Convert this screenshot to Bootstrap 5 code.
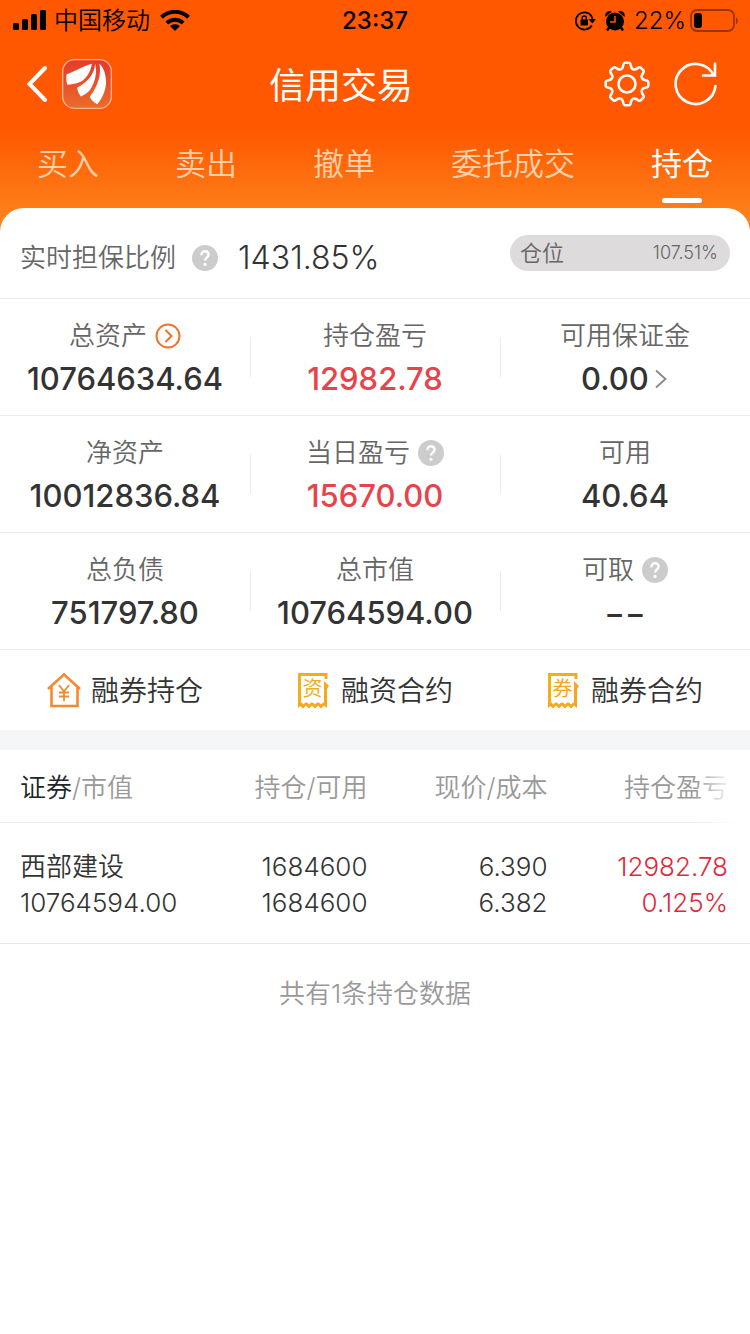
<!DOCTYPE html>
<html lang="zh-CN">
<head>
<meta charset="utf-8">
<meta name="viewport" content="width=device-width, initial-scale=1">
<title>信用交易</title>
<link href="https://cdn.jsdelivr.net/npm/bootstrap@5.3.0/dist/css/bootstrap.min.css" rel="stylesheet">
<style>
  body { font-family: Inter, "Noto Sans CJK SC", sans-serif; font-size: 26px; line-height: 36px; font-weight: 350; color: #333; background: #fff; }
  svg { display: block; flex: none; }
  .hero { background: linear-gradient(#ff5800 0, #ff5800 130px, #fd7d18 208px, #fd8a20 240px); padding-bottom: 32px; }
  .status { height: 40px; padding: 2px 12px 0 12px; font-size: 24px; color: #000; }
  .clock { font-weight: 500; }
  .side { flex: 1 1 0; }
  .topbar { height: 88px; padding: 0 32px 0 24px; }
  .topbar h1 { font-size: 36px; line-height: 48px; font-weight: 400; margin: 4px 60px 0 0; }
  .tabs { padding: 0 37px; height: 80px; }
  .tabs a { font-size: 31px; line-height: 48px; padding: 12px 0 20px; color: #ffd0ac; text-decoration: none; position: relative; }
  .tabs a.active { color: #fff; font-weight: 400; }
  .tabs a.active::after { content: ""; position: absolute; bottom: 5px; left: 50%; margin-left: -20px; width: 40px; height: 5px; border-radius: 3px; background: #fff; }
  .sheet { margin-top: -32px; border-radius: 24px 24px 0 0; background: #fff; }
  .line { border-bottom: 1px solid #ececec; }
  .guarantee { height: 91px; padding: 10px 20px 0; }
  .guarantee .figure-value { font-size: 32px; }
  .soft { color: #666; }
  .pill { width: 220px; height: 36px; margin-top: -10px; padding: 0 12px 0 10px; border-radius: 18px; background: #dddbdc; font-size: 22px; color: #666; }
  .pill .pct { font-size: 18px; }
  .cell { padding: 19px 0 11px; }
  .cell + .cell { background: linear-gradient(#ececec, #ececec) left center / 1px 40px no-repeat; }
  .value { font-size: 31px; line-height: 50px; font-weight: 500; }
  .rise { color: #e8434b; }
  .bare { border: 0; padding: 0; background: none; color: inherit; }
  .quick a { height: 80px; padding-top: 2px; font-size: 28px; color: #333; text-decoration: none; gap: 10px; }
  .band { height: 20px; background: #f5f6f8; }
  .hold { border-collapse: separate; border-spacing: 0; table-layout: fixed; }
  .hold th { height: 73px; padding: 4px 0 0; font-weight: 350; color: #999; white-space: nowrap; border-bottom: 1px solid #ececec; }
  .hold td { padding: 26px 0 22px; border-bottom: 1px solid #e6e6e6; }
  .hold th:first-child, .hold td:first-child { padding-left: 20px; }
  .hold th:last-child, .hold td:last-child { padding-right: 22px; }
  .hold .loss-gain { position: relative; }
  .loss-gain::after { content: ""; position: absolute; right: 0; top: 0; bottom: -1px; width: 56px; background: linear-gradient(to right, rgba(255,255,255,0), rgba(255,255,255,.85) 60%, #fff); }
  .hold .up { color: #dd2b3d; }
  .total { padding: 32px 0; color: #999; }
</style>
</head>
<body>
<svg width="0" height="0" class="position-absolute" aria-hidden="true">
  <defs>
    <linearGradient id="app" x1="0" y1="0" x2="0" y2="1"><stop offset="0" stop-color="#e63a2b"/><stop offset=".6" stop-color="#e8572a"/><stop offset="1" stop-color="#ea6d2b"/></linearGradient>
    <linearGradient id="gold" x1="0" y1="0" x2="1" y2="1"><stop offset="0" stop-color="#eeb414"/><stop offset="1" stop-color="#fba31b"/></linearGradient>
    <symbol id="help" viewBox="0 0 26 26"><circle cx="13" cy="13" r="13" fill="#ccc"/><path d="M9.4 10.2C9.4 4.8 16.8 5.2 16.6 9.8C16.5 12.6 13 12.4 13 15.6" fill="none" stroke="#fff" stroke-width="2.4"/><circle cx="13" cy="19.4" r="1.6" fill="#fff"/></symbol>
    <path id="tooth" d="M-6.1-14.8C-4.3-15.6-4.1-16.8-3.8-18.4C-3.4-20.8-3-21.3-1.6-21.3H1.6C3-21.3 3.4-20.8 3.8-18.4C4.1-16.8 4.3-15.6 6.1-14.8"/>
    <symbol id="bill" viewBox="0 0 32 36"><path d="M29 6V1.500H2.500V32M28.500 12V32" fill="none" stroke="url(#gold)" stroke-width="3"/><path d="M27 8L32 13L30 16H27Z" fill="#f8a91a"/><path d="M1 29.500H30V35L27 32.500L24 35.500L21 32.500L18 35.500L15 32.500L12 35.500L9 32.500L6 35.500L3.500 33L1 35Z" fill="#f7a81a"/><path d="M4 28.500L6.500 31.500L9 28.500L12 31.500L15 28.500L18 31.500L21 28.500L24 31.500L27 28.500Z" fill="#fff"/></symbol>
  </defs>
</svg>

<header class="hero">
  <div class="status d-flex align-items-center">
    <div class="side d-flex align-items-center">
      <svg width="34" height="22" viewBox="0 0 34 22"><rect x="1" y="13" width="6" height="7" rx="1.500"/><rect x="10" y="9" width="6" height="11" rx="1.500"/><rect x="19" y="4" width="6" height="16" rx="1.500"/><rect x="28" y="0" width="6" height="20" rx="1.500"/></svg>
      <span class="ms-2">中国移动</span>
      <svg class="ms-2" width="34" height="22" viewBox="0 0 34 22"><g fill="none" stroke="#000" stroke-width="4"><path d="M3.500 7.300C11 0 23 0 30.500 7.300"/><path d="M8.800 13C13.500 8.600 20.500 8.600 25.200 13"/></g><path d="M17 21L12 16C15 13.600 19 13.600 22 16Z"/></svg>
    </div>
    <span class="clock">23:37</span>
    <div class="side d-flex align-items-center justify-content-end">
      <svg width="22" height="22" viewBox="0 0 22 22"><path d="M17.500 6A8.600 8.600 0 1 0 17.800 15.500M17 5.500Q18.500 7.500 18.600 10" fill="none" stroke="#000" stroke-width="1.800"/><path d="M14.500 9H22L18.300 13.500Z"/><rect x="6.500" y="9.500" width="7.500" height="6" rx="1"/><path d="M8.200 10V8A2 2 0 0 1 12.300 8V10" fill="none" stroke="#000" stroke-width="1.400"/></svg>
      <svg class="ms-2" width="22" height="22" viewBox="0 0 22 22"><circle cx="11" cy="11.500" r="9"/><path d="M1.500 7A4.600 4.600 0 0 1 8 1.500ZM20.500 7A4.600 4.600 0 0 0 14 1.500Z"/><path d="M5.500 17L3 20.500M16.500 17L19 20.500" stroke="#000" stroke-width="2.400"/><path d="M11 6V12H6" fill="none" stroke="#ff5800" stroke-width="1.500"/></svg>
      <span class="ms-2">22%</span>
      <svg class="ms-1" width="48" height="24" viewBox="0 0 48 24"><rect x="1" y="1" width="43" height="21" rx="6" fill="none" stroke="#000" stroke-opacity=".4" stroke-width="1.800"/><rect x="4" y="4" width="8" height="15" rx="3"/><path d="M46 8.500V15C48.500 14 48.500 9.500 46 8.500Z" fill-opacity=".4"/></svg>
    </div>
  </div>

  <nav class="topbar d-flex align-items-center" aria-label="标题">
    <div class="side d-flex align-items-center">
      <button class="bare" type="button" aria-label="返回"><svg width="26" height="40" viewBox="0 0 26 40"><path d="M21 4L5.500 20L21 36" fill="none" stroke="#fff" stroke-width="4" stroke-linecap="round"/></svg></button>
      <a href="#" class="ms-2 ps-1" aria-label="首页"><svg width="50" height="50" viewBox="-2 -2 151 151"><rect x="0" y="0" width="147" height="147" rx="36" fill="url(#app)" stroke="#ffb490" stroke-width="4"/><g fill="#fff"><path d="M88 12C70 16 38 34 12 44C10 54 11 66 14 76C32 74 54 70 64 60C77 48 86 30 88 12Z"/><path d="M98 12C96 42 78 66 44 84C44 92 48 103 55 111C70 104 80 98 87 84C99 62 105 36 98 12Z"/><path d="M111 12C117 42 109 76 82 112C86 122 96 131 105 135C118 118 130 96 131 70C131 44 124 24 111 12Z"/></g></svg></a>
    </div>
    <h1 class="text-white">信用交易</h1>
    <div class="side d-flex align-items-center justify-content-end gap-4">
      <button class="bare" type="button" aria-label="设置"><svg width="46" height="46" viewBox="-23 -23 46 46"><g fill="none" stroke="#fff" stroke-width="2.600"><circle r="8.500"/><use href="#tooth"/><use href="#tooth" transform="rotate(45)"/><use href="#tooth" transform="rotate(90)"/><use href="#tooth" transform="rotate(135)"/><use href="#tooth" transform="rotate(180)"/><use href="#tooth" transform="rotate(225)"/><use href="#tooth" transform="rotate(270)"/><use href="#tooth" transform="rotate(315)"/></g></svg></button>
      <button class="bare" type="button" aria-label="刷新"><svg width="44" height="44" viewBox="0 0 44 44"><path d="M41.500 24A20 20 0 1 1 39.500 13M41 1.500V13.500H29" fill="none" stroke="#fff" stroke-width="2.600" stroke-linecap="round"/></svg></button>
    </div>
  </nav>

  <nav class="tabs d-flex justify-content-between" aria-label="交易">
    <a href="#">买入</a><a href="#">卖出</a><a href="#">撤单</a><a href="#">委托成交</a><a href="#" class="active" aria-current="page">持仓</a>
  </nav>
</header>

<main class="sheet position-relative">
  <section class="guarantee line d-flex align-items-center">
    <span class="soft">实时担保比例</span>
    <button class="bare ms-3" type="button" aria-label="担保比例说明"><svg width="26" height="26"><use href="#help"/></svg></button>
    <span class="figure-value ms-3 ps-1">1431.85%</span>
    <div class="pill ms-auto d-flex align-items-center justify-content-between"><span>仓位</span><span class="pct">107.51%</span></div>
  </section>

  <section class="row g-0 text-center line">
    <div class="col-4 cell">
      <div class="soft d-flex justify-content-center align-items-center gap-2">总资产<button class="bare" type="button" aria-label="总资产明细"><svg width="26" height="26" viewBox="0 0 26 26" fill="none" stroke="#f2702a" stroke-width="2"><circle cx="13" cy="13" r="11.500"/><path d="M10.500 7L16.500 13L10.500 19"/></svg></button></div>
      <div class="value">10764634.64</div>
    </div>
    <div class="col-4 cell"><div class="soft">持仓盈亏</div><div class="value rise">12982.78</div></div>
    <div class="col-4 cell">
      <div class="soft">可用保证金</div>
      <div class="value d-flex justify-content-center align-items-center gap-1">0.00<svg width="16" height="22" viewBox="0 0 16 22"><path d="M3 2.500L12.500 11L3 19.500" fill="none" stroke="#888" stroke-width="1.800"/></svg></div>
    </div>
  </section>
  <section class="row g-0 text-center line">
    <div class="col-4 cell"><div class="soft">净资产</div><div class="value">10012836.84</div></div>
    <div class="col-4 cell">
      <div class="soft d-flex justify-content-center align-items-center gap-2">当日盈亏<button class="bare" type="button" aria-label="当日盈亏说明"><svg width="26" height="26"><use href="#help"/></svg></button></div>
      <div class="value rise">15670.00</div>
    </div>
    <div class="col-4 cell"><div class="soft">可用</div><div class="value">40.64</div></div>
  </section>
  <section class="row g-0 text-center line">
    <div class="col-4 cell"><div class="soft">总负债</div><div class="value">751797.80</div></div>
    <div class="col-4 cell"><div class="soft">总市值</div><div class="value">10764594.00</div></div>
    <div class="col-4 cell">
      <div class="soft d-flex justify-content-center align-items-center gap-2">可取<button class="bare" type="button" aria-label="可取说明"><svg width="26" height="26"><use href="#help"/></svg></button></div>
      <div class="value">−−</div>
    </div>
  </section>

  <nav class="quick row g-0" aria-label="融资融券">
    <a href="#" class="col-4 d-flex justify-content-center align-items-center">
      <svg width="34" height="36" viewBox="0 0 34 36" fill="none" stroke="#f58a2c" stroke-width="2.600"><path d="M1 16L17 1.500L33 16M4.500 14V33H30.500V14"/><path d="M12 12L17 18.500L22 12M17 18.500V28M12 19.500H22M12 23.500H22" stroke-width="1.800"/></svg>融券持仓</a>
    <a href="#" class="col-4 d-flex justify-content-center align-items-center">
      <svg width="34" height="36" viewBox="0 0 34 36"><use href="#bill" width="32" height="36"/><text x="15.500" y="23" text-anchor="middle" font-size="20" font-weight="400" fill="#f0ae1c">资</text></svg>融资合约</a>
    <a href="#" class="col-4 d-flex justify-content-center align-items-center">
      <svg width="34" height="36" viewBox="0 0 34 36"><use href="#bill" width="32" height="36"/><text x="15.500" y="23" text-anchor="middle" font-size="20" font-weight="400" fill="#f9a51a">券</text></svg>融券合约</a>
  </nav>
  <div class="band"></div>

  <table class="hold w-100">
    <colgroup><col style="width:25%"><col style="width:24%"><col style="width:24%"><col style="width:27%"></colgroup>
    <thead><tr>
      <th scope="col"><span class="text-dark">证券</span>/市值</th>
      <th scope="col" class="text-end">持仓/可用</th>
      <th scope="col" class="text-end">现价/成本</th>
      <th scope="col" class="text-end loss-gain">持仓盈亏</th>
    </tr></thead>
    <tbody><tr>
      <td>西部建设<br>10764594.00</td>
      <td class="text-end">1684600<br>1684600</td>
      <td class="text-end">6.390<br>6.382</td>
      <td class="text-end up">12982.78<br>0.125%</td>
    </tr></tbody>
  </table>
  <p class="total text-center m-0">共有1条持仓数据</p>
</main>
<script src="https://cdn.jsdelivr.net/npm/bootstrap@5.3.0/dist/js/bootstrap.bundle.min.js"></script>
</body>
</html>
